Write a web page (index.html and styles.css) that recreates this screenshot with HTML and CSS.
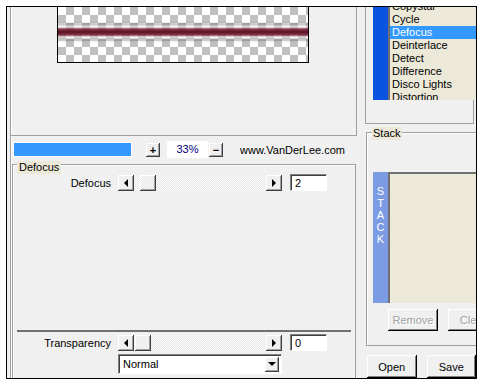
FILE: index.html
```html
<!DOCTYPE html>
<html lang="en">
<head>
    <meta charset="UTF-8">
    <title>Defocus filter</title>
    <link rel="stylesheet" href="styles.css">
</head>
<body>
    <div class="window">
        <div class="left">
            <div class="preview">
                <div class="canvas"></div>
            </div>
            <div class="zoom-row">
                <div class="progress"></div>
                <button class="tiny">+</button>
                <div class="zoom-value">33%</div>
                <button class="tiny minus">&minus;</button>
                <span class="site">www.VanDerLee.com</span>
            </div>
            <div class="group">
                <span class="group-title">Defocus</span>
                <div class="param-row">
                    <span class="param-label">Defocus</span>
                    <div class="slider">
                        <button class="arrow-btn"><i class="tri-left"></i></button>
                        <div class="track"><button class="thumb" style="margin-left: 6px"></button></div>
                        <button class="arrow-btn"><i class="tri-right"></i></button>
                    </div>
                    <div class="edit">2</div>
                </div>
                <div class="separator"></div>
                <div class="param-row transparency">
                    <span class="param-label">Transparency</span>
                    <div class="slider">
                        <button class="arrow-btn"><i class="tri-left"></i></button>
                        <div class="track"><button class="thumb" style="margin-left: 1px"></button></div>
                        <button class="arrow-btn"><i class="tri-right"></i></button>
                    </div>
                    <div class="edit">0</div>
                </div>
                <div class="combo">
                    <span class="combo-text">Normal</span>
                    <button class="combo-btn"><i class="tri-down"></i></button>
                </div>
            </div>
        </div>
        <div class="right">
            <div class="filters">
                <div class="list">
                    <div class="strip"></div>
                    <div class="items">
                        <ul>
                            <li>Copystar</li>
                            <li>Cycle</li>
                            <li class="selected">Defocus</li>
                            <li>Deinterlace</li>
                            <li>Detect</li>
                            <li>Difference</li>
                            <li>Disco Lights</li>
                            <li>Distortion</li>
                        </ul>
                    </div>
                </div>
            </div>
            <div class="stack-group">
                <span class="stack-title">Stack</span>
                <div class="stack-list">
                    <div class="stack-strip">
                        <span>S</span><span>T</span><span>A</span><span>C</span><span>K</span>
                    </div>
                    <div class="stack-items"></div>
                </div>
                <div class="stack-buttons">
                    <button class="btn" disabled>Remove</button>
                    <button class="btn" disabled>Clear</button>
                </div>
            </div>
            <div class="actions">
                <button class="btn big">Open</button>
                <button class="btn big">Save</button>
            </div>
        </div>
    </div>
</body>
</html>
```

FILE: styles.css
```css
body {
    margin: 0;
    padding: 6px;
    background: #fff;
    font-family: "Liberation Sans", Arial, sans-serif;
    font-size: 11px;
    color: #000;
}
button {
    font-family: inherit;
    font-size: 11px;
    padding: 0;
    margin: 0;
    border: none;
    background: #f0f0f0;
    color: #000;
}
ul {
    list-style: none;
    margin: 0;
    padding: 0;
}
.window {
    width: 469px;
    height: 371px;
    border: 1px solid #000;
    background: #f0f0f0;
    overflow: hidden;
    display: flex;
}

/* left side */
.left {
    flex: none;
    width: 346px;
    margin-left: 3px;
    border-left: 1px solid #a0a0a0;
    box-shadow: inset 1px 0 #fff;
    display: flex;
    flex-direction: column;
}
.preview {
    flex: none;
    height: 128px;
    border-right: 1px solid #a0a0a0;
    border-bottom: 1px solid #a0a0a0;
}
.canvas {
    width: 250px;
    height: 55px;
    margin-left: 46px;
    border: 1px solid #000;
    border-top: none;
    background:
        linear-gradient(to bottom,
            transparent 15px,
            rgba(70, 70, 70, 0.35) 17px,
            rgba(255, 255, 255, 0.55) 20px,
            rgba(120, 40, 60, 0.9) 22px,
            rgb(95, 15, 35) 25px,
            rgba(120, 40, 60, 0.9) 28px,
            rgba(255, 255, 255, 0.55) 30px,
            rgba(70, 70, 70, 0.35) 33px,
            transparent 35px),
        repeating-conic-gradient(#c0c0c0 0 25%, #fff 0 50%) 0 0 / 16px 16px;
}
.zoom-row {
    flex: none;
    display: flex;
    align-items: center;
    height: 17px;
    margin-top: 5px;
}
.progress {
    width: 117px;
    height: 13px;
    margin-left: 2px;
    border: 1px solid #fff;
    background: #3399ff;
}
.tiny {
    width: 14px;
    height: 14px;
    margin-left: 14px;
    font-weight: bold;
    line-height: 12px;
    box-shadow: inset -1px -1px #404040, inset 1px 1px #fff, inset -2px -2px #a0a0a0;
}
.tiny.minus {
    margin-left: 1px;
}
.zoom-value {
    width: 41px;
    height: 17px;
    margin-left: 7px;
    background: #fff;
    color: #000080;
    text-align: center;
    line-height: 17px;
}
.site {
    margin-left: 17px;
}
.group {
    flex: none;
    width: 342px;
    height: 230px;
    margin: 6px 0 0 1px;
    border: 1px solid #a0a0a0;
    box-shadow: inset 1px 1px #fff;
    display: flex;
    flex-direction: column;
}
.group-title {
    align-self: flex-start;
    margin: -4px 0 0 4px;
    padding: 0 2px;
    line-height: 13px;
    background: #ece9d8;
}
.param-row {
    display: flex;
    align-items: center;
    height: 17px;
}
.param-label {
    width: 98px;
    margin-right: 7px;
    text-align: right;
}
.slider {
    display: flex;
    height: 16px;
}
.arrow-btn,
.thumb {
    width: 16px;
    height: 16px;
    display: flex;
    align-items: center;
    justify-content: center;
    box-shadow: inset -1px -1px #404040, inset 1px 1px #fff, inset -2px -2px #a0a0a0;
}
.track {
    width: 132px;
    height: 16px;
    display: flex;
    background: repeating-conic-gradient(#fff 0 25%, #e4e4e4 0 50%) 0 0 / 2px 2px;
}
.tri-left,
.tri-right {
    display: block;
    width: 0;
    height: 0;
    border-top: 4px solid transparent;
    border-bottom: 4px solid transparent;
}
.tri-left {
    border-right: 4px solid #000;
}
.tri-right {
    border-left: 4px solid #000;
}
.tri-down {
    display: block;
    width: 0;
    height: 0;
    border-left: 4px solid transparent;
    border-right: 4px solid transparent;
    border-top: 4px solid #000;
}
.edit {
    box-sizing: border-box;
    width: 37px;
    height: 17px;
    margin-left: 8px;
    padding: 2px 0 0 4px;
    background: #fff;
    border: 1px solid;
    border-color: #808080 #fff #fff #808080;
    box-shadow: inset 1px 1px #404040;
    line-height: 13px;
}
.separator {
    height: 2px;
    margin: 139px 4px 0;
    background: #707070;
}
.transparency {
    margin-top: 2px;
}
.combo {
    box-sizing: border-box;
    display: flex;
    align-items: center;
    width: 164px;
    height: 20px;
    margin: 3px 0 0 105px;
    padding: 0 2px 0 4px;
    background: #fff;
    border: 1px solid;
    border-color: #808080 #fff #fff #808080;
    box-shadow: inset 1px 1px #404040;
}
.combo-text {
    flex: 1;
}
.combo-btn {
    width: 14px;
    height: 15px;
    display: flex;
    align-items: center;
    justify-content: center;
    box-shadow: inset -1px -1px #404040, inset 1px 1px #fff, inset -2px -2px #a0a0a0;
}

/* right side */
.right {
    flex: none;
    width: 119px;
    display: flex;
    flex-direction: column;
}
.filters {
    flex: none;
    width: 107px;
    height: 116px;
    margin-left: 8px;
    border: 1px solid #a0a0a0;
    border-top: none;
}
.list {
    display: flex;
    width: 120px;
    height: 93px;
    margin-left: 7px;
    overflow: hidden;
}
.strip {
    width: 15px;
    background: #0a54e0;
}
.items {
    flex: 1;
    border-left: 2px solid #707070;
    background: #ece9d8;
}
.items ul {
    margin-top: -7px;
}
.items li {
    height: 13px;
    line-height: 13px;
    padding-left: 2px;
    white-space: nowrap;
}
.items li.selected {
    background: #3399ff;
    color: #fff;
}
.stack-group {
    flex: none;
    width: 200px;
    margin: 8px 0 0 9px;
    padding-bottom: 14px;
    border: 1px solid #a0a0a0;
    box-shadow: inset 1px 1px #fff;
    display: flex;
    flex-direction: column;
}
.stack-title {
    align-self: flex-start;
    margin: -6px 0 0 5px;
    padding: 0 1px;
    line-height: 13px;
    background: #ece9d8;
}
.stack-list {
    display: flex;
    height: 131px;
    margin: 32px 0 0 6px;
}
.stack-strip {
    width: 15px;
    padding-top: 13px;
    background: #7b9be3;
    color: #fff;
    display: flex;
    flex-direction: column;
    align-items: center;
    line-height: 12px;
}
.stack-items {
    flex: 1;
    border-left: 2px solid #707070;
    border-top: 2px solid #707070;
    background: #ece9d8;
}
.stack-buttons {
    display: flex;
    gap: 10px;
    margin: 6px 0 0 21px;
}
.btn {
    width: 50px;
    height: 22px;
    box-shadow: inset -1px -1px #000, inset 1px 1px #fff, inset -2px -2px #808080;
}
.btn:disabled {
    color: #a0a0a0;
    text-shadow: 1px 1px #fff;
}
.actions {
    display: flex;
    gap: 10px;
    margin: 9px 0 0 10px;
}
.btn.big {
    height: 23px;
}
```
